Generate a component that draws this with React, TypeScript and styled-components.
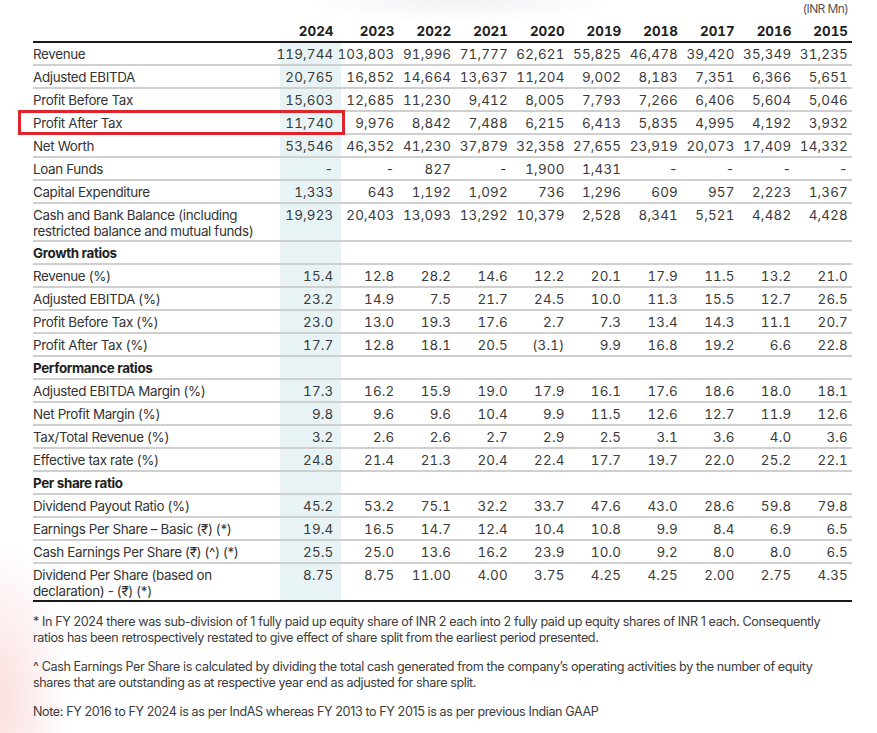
import styled, { createGlobalStyle } from 'styled-components';

const GlobalStyle = createGlobalStyle`
  html, body {
    margin: 0;
    padding: 0;
    background: #ffffff;
  }
  body {
    font-family: Inter, 'Noto Sans', Arial, sans-serif;
    color: #333;
  }
`;

const years = ['2024', '2023', '2022', '2021', '2020', '2019', '2018', '2017', '2016', '2015'];

type Row = {
  label: string;
  values?: string[];
  section?: boolean;
  tall?: boolean;
  marked?: boolean;
};

const rows: Row[] = [
  { label: 'Revenue', values: ['119,744', '103,803', '91,996', '71,777', '62,621', '55,825', '46,478', '39,420', '35,349', '31,235'] },
  { label: 'Adjusted EBITDA', values: ['20,765', '16,852', '14,664', '13,637', '11,204', '9,002', '8,183', '7,351', '6,366', '5,651'] },
  { label: 'Profit Before Tax', values: ['15,603', '12,685', '11,230', '9,412', '8,005', '7,793', '7,266', '6,406', '5,604', '5,046'] },
  { label: 'Profit After Tax', marked: true, values: ['11,740', '9,976', '8,842', '7,488', '6,215', '6,413', '5,835', '4,995', '4,192', '3,932'] },
  { label: 'Net Worth', values: ['53,546', '46,352', '41,230', '37,879', '32,358', '27,655', '23,919', '20,073', '17,409', '14,332'] },
  { label: 'Loan Funds', values: ['-', '-', '827', '-', '1,900', '1,431', '-', '-', '-', '-'] },
  { label: 'Capital Expenditure', values: ['1,333', '643', '1,192', '1,092', '736', '1,296', '609', '957', '2,223', '1,367'] },
  { label: 'Cash and Bank Balance (including restricted balance and mutual funds)', tall: true, values: ['19,923', '20,403', '13,093', '13,292', '10,379', '2,528', '8,341', '5,521', '4,482', '4,428'] },
  { label: 'Growth ratios', section: true },
  { label: 'Revenue (%)', values: ['15.4', '12.8', '28.2', '14.6', '12.2', '20.1', '17.9', '11.5', '13.2', '21.0'] },
  { label: 'Adjusted EBITDA (%)', values: ['23.2', '14.9', '7.5', '21.7', '24.5', '10.0', '11.3', '15.5', '12.7', '26.5'] },
  { label: 'Profit Before Tax (%)', values: ['23.0', '13.0', '19.3', '17.6', '2.7', '7.3', '13.4', '14.3', '11.1', '20.7'] },
  { label: 'Profit After Tax (%)', values: ['17.7', '12.8', '18.1', '20.5', '(3.1)', '9.9', '16.8', '19.2', '6.6', '22.8'] },
  { label: 'Performance ratios', section: true },
  { label: 'Adjusted EBITDA Margin (%)', values: ['17.3', '16.2', '15.9', '19.0', '17.9', '16.1', '17.6', '18.6', '18.0', '18.1'] },
  { label: 'Net Profit Margin (%)', values: ['9.8', '9.6', '9.6', '10.4', '9.9', '11.5', '12.6', '12.7', '11.9', '12.6'] },
  { label: 'Tax/Total Revenue (%)', values: ['3.2', '2.6', '2.6', '2.7', '2.9', '2.5', '3.1', '3.6', '4.0', '3.6'] },
  { label: 'Effective tax rate (%)', values: ['24.8', '21.4', '21.3', '20.4', '22.4', '17.7', '19.7', '22.0', '25.2', '22.1'] },
  { label: 'Per share ratio', section: true },
  { label: 'Dividend Payout Ratio (%)', values: ['45.2', '53.2', '75.1', '32.2', '33.7', '47.6', '43.0', '28.6', '59.8', '79.8'] },
  { label: 'Earnings Per Share – Basic (₹) (*)', values: ['19.4', '16.5', '14.7', '12.4', '10.4', '10.8', '9.9', '8.4', '6.9', '6.5'] },
  { label: 'Cash Earnings Per Share (₹) (^) (*)', values: ['25.5', '25.0', '13.6', '16.2', '23.9', '10.0', '9.2', '8.0', '8.0', '6.5'] },
  { label: 'Dividend Per Share (based on declaration) - (₹) (*)', tall: true, values: ['8.75', '8.75', '11.00', '4.00', '3.75', '4.25', '4.25', '2.00', '2.75', '4.35'] },
];

const Page = styled.div`
  position: relative;
  width: 877px;
  height: 733px;
  overflow: hidden;
  background:
    radial-gradient(ellipse 70px 160px at 0px 700px, rgba(246, 196, 196, 0.55), rgba(255, 255, 255, 0) 100%),
    radial-gradient(ellipse 160px 22px at 460px 0px, rgba(225, 228, 232, 0.5), rgba(255, 255, 255, 0) 100%),
    #ffffff;
`;

const Content = styled.div`
  display: flex;
  flex-direction: column;
  width: 819px;
  margin-left: 33px;
`;

const Unit = styled.div`
  height: 16px;
  display: flex;
  justify-content: flex-end;
  align-items: center;
  padding-right: 4px;
  font-size: 12px;
  letter-spacing: -0.6px;
  color: #555;
`;

const Grid = styled.div<{ $height: number; $line: string }>`
  position: relative;
  display: grid;
  grid-template-columns: 1fr 61px 58px repeat(8, 56.7px);
  height: ${(p) => p.$height}px;
  border-bottom: 2px solid ${(p) => p.$line};
  box-sizing: border-box;
`;

const Marker = styled.div`
  position: absolute;
  left: -15px;
  top: -2px;
  width: 327px;
  height: 25px;
  border: 3px solid #e0242b;
  box-sizing: border-box;
  pointer-events: none;
`;

const Label = styled.div<{ $bold?: boolean; $tall?: boolean }>`
  display: flex;
  align-items: ${(p) => (p.$tall ? 'flex-start' : 'center')};
  padding-top: ${(p) => (p.$tall ? '3px' : '0')};
  font-size: 13.4px;
  line-height: 16px;
  letter-spacing: -0.35px;
  font-weight: ${(p) => (p.$bold ? 700 : 400)};
  color: ${(p) => (p.$bold ? '#1e1e1e' : '#333')};
  padding-right: 20px;
`;

const Cell = styled.div<{ $hl?: boolean; $head?: boolean; $tall?: boolean; $pad: number }>`
  display: flex;
  justify-content: flex-end;
  align-items: ${(p) => (p.$tall ? 'flex-start' : 'center')};
  padding-top: ${(p) => (p.$head ? '5px' : p.$tall ? '3px' : '0')};
  padding-right: ${(p) => p.$pad}px;
  background: ${(p) => (p.$hl ? '#e8f3f5' : 'transparent')};
  font-size: 13.4px;
  line-height: 16px;
  font-weight: ${(p) => (p.$head ? 700 : 400)};
  color: ${(p) => (p.$head ? '#1e1e1e' : '#3a3a3a')};
  letter-spacing: ${(p) => (p.$head ? '0' : '0.2px')};
  font-variant-numeric: tabular-nums;
  white-space: nowrap;
`;

const Notes = styled.div`
  display: flex;
  flex-direction: column;
  gap: 14px;
  margin-top: 12px;
  font-size: 12.6px;
  line-height: 15.5px;
  letter-spacing: -0.4px;
  color: #3c3c3c;
`;

const Note = styled.p`
  margin: 0;
  width: 812px;
`;

const pad = (i: number) => (i === 0 ? 7 : 4);

export default function App() {
  return (
    <Page>
      <GlobalStyle />
      <Content>
        <Unit>(INR Mn)</Unit>
        <Grid $height={27} $line="#1a1a1a">
          <Label />
          {years.map((y, i) => (
            <Cell key={y} $head $pad={pad(i)}>
              {y}
            </Cell>
          ))}
        </Grid>
        {rows.map((r, idx) => {
          const last = idx === rows.length - 1;
          return (
            <Grid key={r.label} $height={r.tall ? 38 : 23} $line={last ? '#1a1a1a' : '#cfcfcf'}>
              <Label $bold={r.section} $tall={r.tall}>
                {r.label}
              </Label>
              {years.map((y, i) => (
                <Cell key={y} $hl={i === 0} $tall={r.tall} $pad={pad(i)}>
                  {r.values ? r.values[i] : ''}
                </Cell>
              ))}
              {r.marked && <Marker />}
            </Grid>
          );
        })}
        <Notes>
          <Note>
            * In FY 2024 there was sub-division of 1 fully paid up equity share of INR 2 each into 2 fully paid up equity shares of INR 1 each. Consequently ratios has been retrospectively restated to give effect of share split from the earliest period presented.
          </Note>
          <Note>
            ^ Cash Earnings Per Share is calculated by dividing the total cash generated from the company’s operating activities by the number of equity shares that are outstanding as at respective year end as adjusted for share split.
          </Note>
          <Note>Note: FY 2016 to FY 2024 is as per IndAS whereas FY 2013 to FY 2015 is as per previous Indian GAAP</Note>
        </Notes>
      </Content>
    </Page>
  );
}
